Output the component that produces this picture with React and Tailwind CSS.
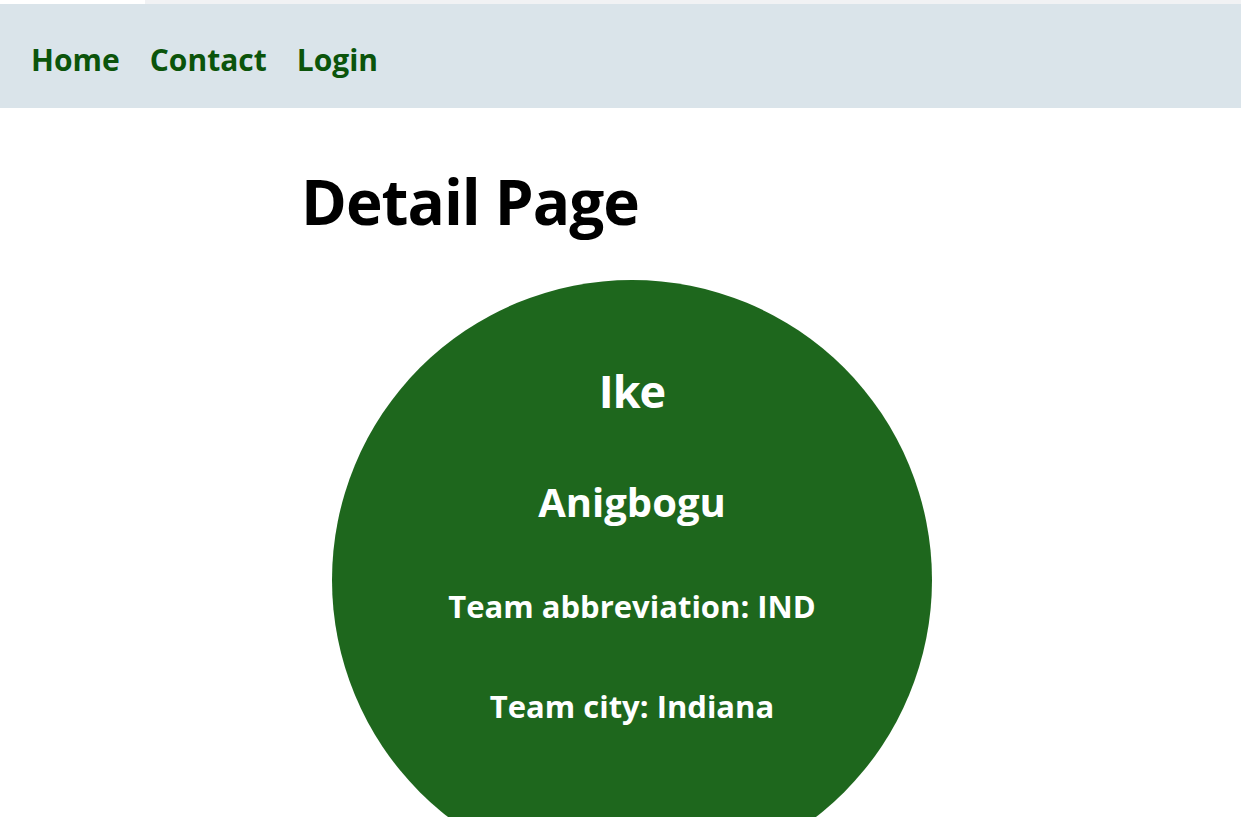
const player = {
  firstName: 'Ike',
  lastName: 'Anigbogu',
  abbreviation: 'IND',
  city: 'Indiana',
};

const links = ['Home', 'Contact', 'Login'];

const App = () => {
  return (
    <div className="h-[817px] overflow-hidden bg-white font-['Open_Sans',sans-serif]">
      <div className="flex h-[4px]">
        <div className="w-[145px] bg-white" />
        <div className="flex-1 bg-[#f1f2f4]" />
      </div>
      <nav className="flex h-[104px] items-center gap-[30px] bg-[#dae4ea] pl-[31px] pt-[6px]">
        {links.map((link) => (
          <a key={link} href="#" className="text-[30px] font-bold text-[#0b540b]">
            {link}
          </a>
        ))}
      </nav>

      <main className="pl-[301px]">
        <h1 className="mt-[62px] text-[62px] font-bold leading-none tracking-[-1px] text-black">Detail Page</h1>
        <div className="ml-[31px] mt-[48px] flex h-[600px] w-[600px] flex-col items-center rounded-full bg-[#1e671d] pt-[88px] text-white">
          <h2 className="text-[45px] font-bold leading-none tracking-[-1px]">{player.firstName}</h2>
          <h3 className="mt-[69px] text-[40px] font-bold leading-none">{player.lastName}</h3>
          <p className="mt-[69px] text-[31px] font-bold leading-none">Team abbreviation: {player.abbreviation}</p>
          <p className="mt-[69px] text-[31px] font-bold leading-none">Team city: {player.city}</p>
        </div>
      </main>
    </div>
  );
};

export default App;
